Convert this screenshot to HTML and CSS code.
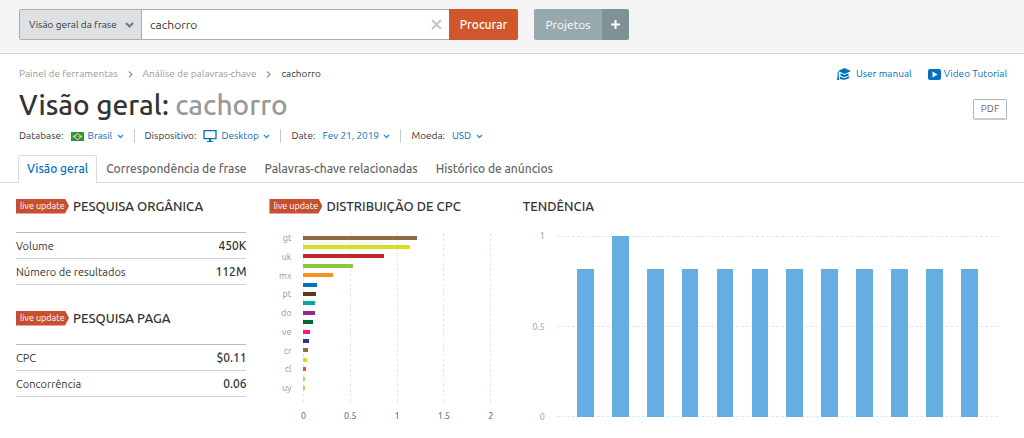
FILE: index.html
```html
<!DOCTYPE html>
<html lang="pt-BR">
<head>
<meta charset="utf-8">
<meta name="viewport" content="width=device-width, initial-scale=1">
<title>Visão geral: cachorro</title>
<link rel="stylesheet" href="styles.css">
</head>
<body>
<header class="topbar">
  <form class="search" role="search">
    <div class="search-type">
      <select class="search-select" aria-label="Tipo de pesquisa"><option>Visão geral da frase</option></select>
      <svg class="chevron" width="9" height="6" viewBox="0 0 9 6"><path d="M1 1l3.500 3.500L8 1" fill="none" stroke="currentColor" stroke-width="2"/></svg>
    </div>
    <input class="search-input" type="text" value="cachorro" aria-label="Palavra-chave">
    <button class="search-clear" type="button" aria-label="Limpar"><svg width="11" height="11" viewBox="0 0 11 11"><path d="M1 1l9 9M10 1l-9 9" fill="none" stroke="currentColor" stroke-width="2"/></svg></button>
    <button class="search-submit" type="submit">Procurar</button>
  </form>
  <div class="projects">
    <button class="projects-open" type="button">Projetos</button>
    <button class="projects-add" type="button" aria-label="Novo projeto"><svg width="9" height="9" viewBox="0 0 9 9"><path d="M4.500 0v9M0 4.500h9" stroke="currentColor" stroke-width="2"/></svg></button>
  </div>
</header>

<section class="intro">
  <div class="intro-row">
    <nav class="crumbs" aria-label="Navegação">
      <a href="#">Painel de ferramentas</a>
      <svg width="5" height="7" viewBox="0 0 5 7"><path d="M1 .5l3 3-3 3" fill="none" stroke="currentColor" stroke-width="1.300"/></svg>
      <a href="#">Análise de palavras-chave</a>
      <svg width="5" height="7" viewBox="0 0 5 7"><path d="M1 .5l3 3-3 3" fill="none" stroke="currentColor" stroke-width="1.300"/></svg>
      <span class="crumb-current">cachorro</span>
    </nav>
    <div class="help">
      <a href="#"><svg width="14" height="13" viewBox="0 0 14 13" fill="currentColor"><path d="M7.500 0L14 3 7.500 6 1 3zM3.500 5.200l4 1.900 4-1.900v2.400c-2 1.900-6 1.900-8 0zM.6 3.800h1.100v3.500l.4 4.700H0l.6-4.700zM2.900 8.500c3 2 6.500 1.800 9.600-.4l-.5 2c-2.600 1.900-6.600 2.200-9.400.6z"/></svg><span>User manual</span></a>
      <a class="help-video" href="#"><svg width="13" height="11" viewBox="0 0 13 11"><rect width="13" height="11" rx="2" fill="currentColor"/><path d="M4.500 2.500v6l5-3z" fill="#fff"/></svg><span>Video Tutorial</span></a>
    </div>
  </div>
  <div class="intro-row">
    <h1 class="title">Visão geral: <span class="title-term">cachorro</span></h1>
    <button class="pdf" type="button">PDF</button>
  </div>
  <div class="filters">
    <div class="filter">
      <label for="database">Database:</label>
      <svg width="13" height="9" viewBox="0 0 13 9"><path fill="#229b45" d="M0 0h13v9H0z"/><path fill="#f3d72d" d="M6.500 1l5 3.500-5 3.500-5-3.500z"/><circle cx="6.500" cy="4.500" r="2" fill="#305091"/><path d="M4.600 4q2-.5 3.800 1" stroke="#fff" stroke-width=".6" fill="none"/></svg>
      <select id="database"><option>Brasil</option></select>
      <svg class="caret" width="7" height="5" viewBox="0 0 7 5"><path d="M1 1l2.500 2.500L6 1" fill="none" stroke="currentColor" stroke-width="1.300"/></svg>
    </div>
    <div class="filter">
      <label for="device">Dispositivo:</label>
      <svg class="screen" width="14" height="12" viewBox="0 0 14 12"><path d="M1 .7h12v8H1z" fill="none" stroke="currentColor" stroke-width="1.300"/><path d="M6 9h2v2h2v1H4v-1h2z" fill="currentColor"/></svg>
      <select id="device"><option>Desktop</option></select>
      <svg class="caret" width="7" height="5" viewBox="0 0 7 5"><path d="M1 1l2.500 2.500L6 1" fill="none" stroke="currentColor" stroke-width="1.300"/></svg>
    </div>
    <div class="filter">
      <label for="date">Date:</label>
      <select id="date"><option>Fev 21, 2019</option></select>
      <svg class="caret" width="7" height="5" viewBox="0 0 7 5"><path d="M1 1l2.500 2.500L6 1" fill="none" stroke="currentColor" stroke-width="1.300"/></svg>
    </div>
    <div class="filter">
      <label for="currency">Moeda:</label>
      <select id="currency"><option>USD</option></select>
      <svg class="caret" width="7" height="5" viewBox="0 0 7 5"><path d="M1 1l2.500 2.500L6 1" fill="none" stroke="currentColor" stroke-width="1.300"/></svg>
    </div>
  </div>
</section>

<nav class="tabs" aria-label="Relatórios">
  <a class="tab tab-active" href="#">Visão geral</a>
  <a class="tab" href="#">Correspondência de frase</a>
  <a class="tab" href="#">Palavras-chave relacionadas</a>
  <a class="tab" href="#">Histórico de anúncios</a>
</nav>

<main class="report">
  <div class="column">
    <section>
      <div class="heading"><span class="badge">live update</span><h2>PESQUISA ORGÂNICA</h2></div>
      <table class="stats">
        <tr><th scope="row">Volume</th><td>450K</td></tr>
        <tr><th scope="row">Número de resultados</th><td>112M</td></tr>
      </table>
    </section>
    <section>
      <div class="heading"><span class="badge">live update</span><h2>PESQUISA PAGA</h2></div>
      <table class="stats">
        <tr><th scope="row">CPC</th><td>$0.11</td></tr>
        <tr><th scope="row">Concorrência</th><td>0.06</td></tr>
      </table>
    </section>
  </div>

  <section>
    <div class="heading"><span class="badge">live update</span><h2>DISTRIBUIÇÃO DE CPC</h2></div>
    <div class="cpc">
      <div class="cpc-labels"><span>gt</span><span>uk</span><span>mx</span><span>pt</span><span>do</span><span>ve</span><span>cr</span><span>cl</span><span>uy</span></div>
      <div class="cpc-lines"><i></i><i></i><i></i><i></i><i></i></div>
      <div class="cpc-bars">
        <i style="width:60.500%;background:#8f6844"></i>
        <i style="width:57%;background:#d8df23"></i>
        <i style="width:43%;background:#c0272d"></i>
        <i style="width:26.500%;background:#8cc540"></i>
        <i style="width:16%;background:#f7931e"></i>
        <i style="width:7%;background:#0071bc"></i>
        <i style="width:6.700%;background:#603813"></i>
        <i style="width:6%;background:#00a99d"></i>
        <i style="width:6%;background:#93278f"></i>
        <i style="width:5%;background:#006837"></i>
        <i style="width:3.700%;background:#ed1e79"></i>
        <i style="width:2.800%;background:#2e3192"></i>
        <i style="width:2.500%;background:#8f6844"></i>
        <i style="width:1.800%;background:#d8df23"></i>
        <i style="width:1.200%;background:#d0565b"></i>
        <i style="width:.6%;background:#a9d36f"></i>
        <i style="width:.6%;background:#f9b265"></i>
      </div>
      <div class="cpc-axis"><span>0</span><span>0.5</span><span>1</span><span>1.5</span><span>2</span></div>
    </div>
  </section>

  <section>
    <div class="heading"><h2>TENDÊNCIA</h2></div>
    <div class="trend">
      <div class="trend-labels"><span>1</span><span>0.5</span><span>0</span></div>
      <div class="trend-lines"><i></i><i></i><i></i></div>
      <div class="trend-bars">
        <i style="height:82%"></i><i style="height:100%"></i><i style="height:82%"></i><i style="height:82%"></i><i style="height:82%"></i><i style="height:82%"></i><i style="height:82%"></i><i style="height:82%"></i><i style="height:82%"></i><i style="height:82%"></i><i style="height:82%"></i><i style="height:82%"></i>
      </div>
    </div>
  </section>
</main>
</body>
</html>
```

FILE: styles.css
```css
* { box-sizing: border-box; }

body {
  margin: 0;
  background: #fff;
  color: #333;
  font: 11px/16px Ubuntu, "Noto Sans", "Open Sans", sans-serif;
}

svg { display: block; flex: none; }
a { color: inherit; text-decoration: none; }
h1, h2 { margin: 0; font-weight: 500; }
button, input, select { margin: 0; font: inherit; }
select { appearance: none; border: 0; padding: 0; background: none; color: inherit; }

/* Top bar */
.topbar {
  display: flex;
  gap: 16px;
  padding: 9px 19px 13px;
  border-bottom: 1px solid #d6d6d6;
  background: #f4f4f4;
}
.search {
  display: flex;
  flex: 0 1 499px;
  height: 31px;
  border: 1px solid #a9aeb0;
  border-radius: 2px;
  background: #fff;
}
.search-type {
  display: flex;
  align-items: center;
  justify-content: space-between;
  width: 122px;
  padding: 0 7px 0 9px;
  border-right: 1px solid #a9aeb0;
  background: #dde1e4;
  font-size: 10px;
}
.chevron { color: #777; }
.search-input {
  flex: 1;
  min-width: 0;
  padding: 0 8px;
  border: 0;
  background: none;
  color: #333;
  font-size: 12px;
}
.search-clear { padding: 0 7px; border: 0; background: none; color: #c4c4c4; }
.search-submit {
  width: 69px;
  margin: -1px -1px -1px 0;
  padding: 0;
  border: 0;
  border-radius: 0 2px 2px 0;
  background: #d2562b;
  color: #fff;
  font-size: 12px;
  font-weight: 500;
}
.projects { display: flex; height: 31px; overflow: hidden; border-radius: 2px; color: #fff; }
.projects button {
  display: grid;
  place-items: center;
  padding: 0;
  border: 0;
  color: inherit;
  font-size: 12px;
}
.projects .projects-open { width: 68px; background: #98a9ae; }
.projects .projects-add { width: 27px; background: #7e9196; }

/* Title area */
.intro { padding: 12px 17px 0 19px; }
.intro-row { display: flex; align-items: center; justify-content: space-between; }
.crumbs { display: flex; align-items: center; gap: 10px; color: #999; font-size: 10px; }
.crumb-current { color: #333; }
.help { display: flex; gap: 16px; color: #0071bc; font-size: 10px; }
.help a { display: flex; align-items: center; gap: 5px; }
.help .help-video { gap: 3px; }
.title { font-size: 28px; line-height: 46px; }
.title-term { color: #999; }
.pdf {
  width: 34px;
  height: 21px;
  margin-top: 8px;
  padding: 0;
  border: 1px solid #a9b8bd;
  border-bottom: 2px solid #c3ced1;
  border-radius: 2px;
  background: #fff;
  color: #666;
  font-size: 10px;
}
.filters { display: flex; align-items: center; font-size: 10px; }
.filter { display: flex; align-items: center; color: #0071bc; }
.filter + .filter { margin-left: 10px; padding-left: 10px; border-left: 1px solid #ccc; line-height: 14px; }
.filter label { margin-right: 7px; color: #333; }
.filter select { margin: 0 4px; }
.filter label + select { margin-left: 0; }
.caret { color: #2f8edb; }

/* Tabs */
.tabs {
  display: flex;
  margin-top: 11px;
  padding: 0 18px;
  border-bottom: 1px solid #dcdcdc;
  color: #666;
  font-size: 12px;
  font-weight: 500;
}
.tab { padding: 5px 8px; border: 1px solid transparent; border-bottom: 0; }
.tab-active {
  margin-bottom: -1px;
  border-color: #dcdcdc;
  border-radius: 3px 3px 0 0;
  background: #fff;
  color: #0071bc;
}

/* Report */
.report {
  display: grid;
  grid-template-columns: minmax(0, 19fr) minmax(0, 19fr) minmax(0, 40fr);
  gap: 23px;
  padding: 14px 16px 12px;
}
.column { display: grid; gap: 24px; align-content: start; }
.heading { display: flex; align-items: center; gap: 4px; height: 18px; }
.heading h2 { font-size: 13px; white-space: nowrap; }
.badge {
  width: 53px;
  flex: none;
  padding-left: 4px;
  clip-path: polygon(0 0, 49px 0, 100% 50%, 49px 100%, 0 100%);
  background: #c54f30;
  color: #fff;
  font-size: 9px;
  line-height: 15px;
  white-space: nowrap;
}
.stats { width: 100%; margin-top: 17px; border-collapse: collapse; border-top: 1px solid #bbb; }
.stats tr { border-bottom: 1px solid #d2d2d2; }
.stats th { height: 26px; padding: 0; font-weight: 400; text-align: left; }
.stats td { padding: 0; font-size: 12px; font-weight: 500; text-align: right; }

/* Horizontal bars: average click cost by country */
.cpc {
  display: grid;
  grid-template: 169px 27px / 22px 1fr;
  column-gap: 12px;
  margin-top: 18px;
  padding-right: 9px;
}
.cpc-labels {
  display: grid;
  grid-auto-rows: 1fr;
  color: #999;
  font-size: 9px;
  line-height: 10px;
  text-align: right;
}
.cpc-lines, .cpc-bars { grid-area: 1 / 2; }
.cpc-lines { display: flex; justify-content: space-between; }
.cpc-lines i { border-left: 1px dashed #dfe8e9; }
.cpc-bars { display: grid; grid-template-rows: repeat(18, 1fr); align-items: center; }
.cpc-bars i { height: 4px; }
.cpc-axis {
  display: flex;
  grid-column: 2;
  align-items: center;
  justify-content: space-between;
  color: #555;
  font-size: 9px;
}
.cpc-axis span { display: flex; justify-content: center; width: 0; }

/* Vertical bars: monthly search trend */
.trend {
  display: grid;
  grid-template: 181px / 22px 1fr;
  column-gap: 12px;
  margin-top: 21px;
  padding-right: 10px;
}
.trend-labels {
  display: flex;
  flex-direction: column;
  justify-content: space-between;
  color: #999;
  font-size: 9px;
  text-align: right;
}
.trend-labels span { height: 0; line-height: 0; }
.trend-lines, .trend-bars { grid-area: 1 / 2; }
.trend-lines { display: flex; flex-direction: column; justify-content: space-between; }
.trend-lines i { border-top: 1px dashed #dfe8e9; }
.trend-bars { display: flex; align-items: flex-end; justify-content: space-around; padding: 0 11px; }
.trend-bars i { width: 4%; background: #64aee1; }
```
